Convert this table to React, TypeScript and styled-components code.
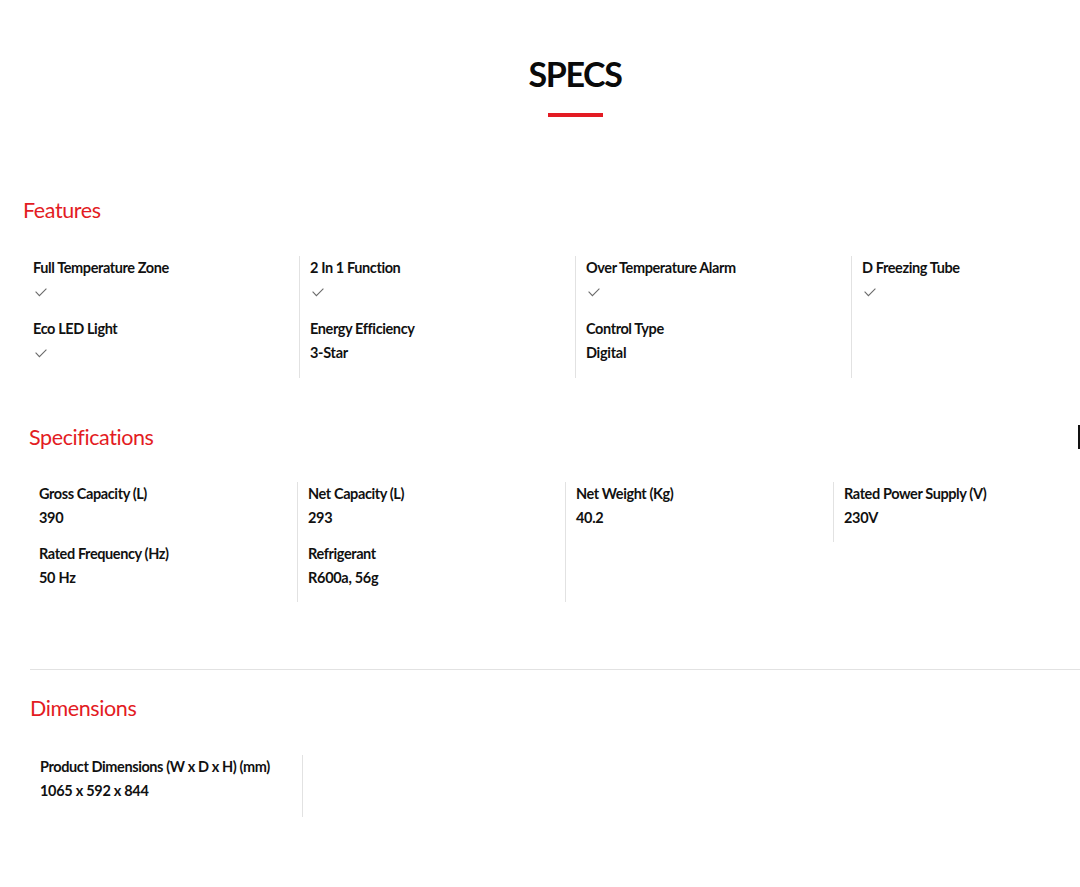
import React from 'react';
import styled, { createGlobalStyle } from 'styled-components';

const GlobalStyle = createGlobalStyle`
  *, *::before, *::after {
    box-sizing: border-box;
  }
  body {
    margin: 0;
    background: #fff;
    font-family: Lato, "Noto Sans", sans-serif;
    color: #111;
  }
`

const Page = styled.div`
  width: 1080px;
  overflow: hidden;
  padding-bottom: 70px;
`

const TitleBlock = styled.div`
  display: flex;
  flex-direction: column;
  align-items: center;
  padding: 52px 0 0 70px;
`

const Title = styled.h1`
  margin: 0;
  font-size: 34px;
  line-height: 44px;
  font-weight: 700;
  letter-spacing: -1.4px;
  color: #0a0a0a;
`

const TitleBar = styled.div`
  width: 55px;
  height: 4px;
  background: #e31b23;
  margin-top: 17px;
`

const Section = styled.section<{ $left: number; $top: number }>`
  padding-left: ${p => p.$left}px;
  margin-top: ${p => p.$top}px;
`

const HeadingRow = styled.div<{ $top?: number }>`
  display: flex;
  justify-content: space-between;
  align-items: center;
  margin-top: ${p => p.$top ?? 0}px;
`

const Heading = styled.h2`
  margin: 0;
  font-size: 21.5px;
  line-height: 28px;
  font-weight: 400;
  color: #e31b23;
  letter-spacing: -0.4px;
`

const Caret = styled.div`
  width: 2px;
  height: 24px;
  background: #111;
`

const Grid = styled.div<{ $col: number; $top: number }>`
  display: grid;
  grid-template-columns: repeat(4, ${p => p.$col}px);
  margin-top: ${p => p.$top}px;
`

const Column = styled.div<{ $first?: boolean; $short?: boolean }>`
  display: flex;
  flex-direction: column;
  padding-left: 10px;
  border-left: ${p => (p.$first ? 'none' : '1px solid #e2e2e2')};
  align-self: ${p => (p.$short ? 'start' : 'stretch')};
`

const Item = styled.div<{ $h: number }>`
  height: ${p => p.$h}px;
  display: flex;
  flex-direction: column;
  padding-top: 2px;
`

const Label = styled.div`
  font-size: 14.5px;
  line-height: 20px;
  font-weight: 700;
  letter-spacing: -0.4px;
  color: #111;
  white-space: nowrap;
`

const Value = styled.div`
  margin-top: 4px;
  font-size: 14.5px;
  line-height: 20px;
  font-weight: 700;
  letter-spacing: -0.3px;
  color: #111;
`

const CheckWrap = styled.div`
  margin-top: 4px;
  height: 20px;
  display: flex;
  align-items: center;
  padding-left: 2px;
`

const Divider = styled.hr`
  margin: 0;
  border: none;
  border-top: 1px solid #e2e2e2;
`

const DimRow = styled.div`
  margin-top: 33px;
  display: flex;
`

const DimCell = styled.div`
  width: 273px;
  padding-left: 10px;
  height: 62px;
  border-right: 1px solid #e2e2e2;
`

const Check = () => (
  <svg width="12" height="9" viewBox="0 0 12 9" fill="none">
    <path d="M0.6 3.6 L4.4 7.6 L11.4 0.6" stroke="#6b6b6b" strokeWidth="1.1" />
  </svg>
)

type Entry = { label: string; value?: string }

const features: Entry[][] = [
  [{ label: 'Full Temperature Zone' }, { label: 'Eco LED Light' }],
  [{ label: '2 In 1 Function' }, { label: 'Energy Efficiency', value: '3-Star' }],
  [{ label: 'Over Temperature Alarm' }, { label: 'Control Type', value: 'Digital' }],
  [{ label: 'D Freezing Tube' }],
]

const specs: Entry[][] = [
  [{ label: 'Gross Capacity (L)', value: '390' }, { label: 'Rated Frequency (Hz)', value: '50 Hz' }],
  [{ label: 'Net Capacity (L)', value: '293' }, { label: 'Refrigerant', value: 'R600a, 56g' }],
  [{ label: 'Net Weight (Kg)', value: '40.2' }],
  [{ label: 'Rated Power Supply (V)', value: '230V' }],
]

const App = () => {
  return (
    <Page>
      <GlobalStyle />
      <TitleBlock>
        <Title>SPECS</Title>
        <TitleBar />
      </TitleBlock>

      <Section $left={23} $top={79}>
        <HeadingRow>
          <Heading>Features</Heading>
        </HeadingRow>
        <Grid $col={276} $top={32}>
          {features.map((col, i) => (
            <Column key={i} $first={i === 0}>
              {col.map(e => (
                <Item key={e.label} $h={61}>
                  <Label>{e.label}</Label>
                  {e.value ? <Value>{e.value}</Value> : <CheckWrap><Check /></CheckWrap>}
                </Item>
              ))}
            </Column>
          ))}
        </Grid>
      </Section>

      <Section $left={29} $top={45}>
        <HeadingRow>
          <Heading>Specifications</Heading>
          <Caret />
        </HeadingRow>
        <Grid $col={268} $top={31}>
          {specs.map((col, i) => (
            <Column key={i} $first={i === 0} $short={i === 3}>
              {col.map(e => (
                <Item key={e.label} $h={60}>
                  <Label>{e.label}</Label>
                  <Value>{e.value}</Value>
                </Item>
              ))}
            </Column>
          ))}
        </Grid>
      </Section>

      <Section $left={30} $top={67}>
        <Divider />
        <HeadingRow $top={24}>
          <Heading>Dimensions</Heading>
        </HeadingRow>
        <DimRow>
          <DimCell>
            <Item $h={62}>
              <Label>Product Dimensions (W x D x H) (mm)</Label>
              <Value>1065 x 592 x 844</Value>
            </Item>
          </DimCell>
        </DimRow>
      </Section>
    </Page>
  );
}

export default App;
